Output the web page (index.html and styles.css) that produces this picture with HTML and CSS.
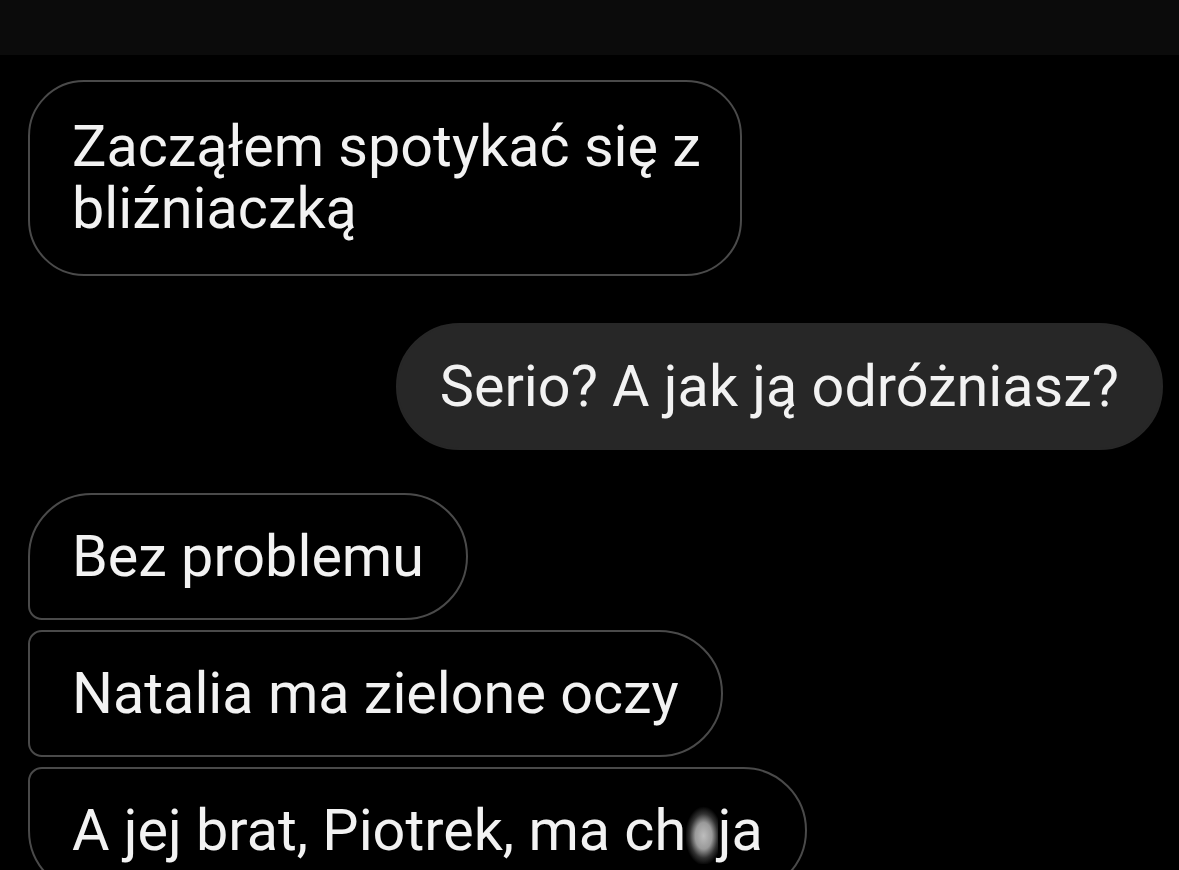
FILE: index.html
```html
<!DOCTYPE html>
<html lang="pl">
<head>
    <meta charset="utf-8">
    <title>Czat</title>
    <link rel="stylesheet" href="styles.css">
</head>
<body>
    <div class="topbar"></div>
    <div class="chat">
        <div class="msg msg-in msg-wide">Zacząłem spotykać się z<br>bliźniaczką</div>
        <div class="msg msg-out">Serio? A jak ją odróżniasz?</div>
        <div class="group">
            <div class="msg msg-in msg-first">Bez problemu</div>
            <div class="msg msg-in msg-middle">Natalia ma zielone oczy</div>
            <div class="msg msg-in msg-last">A jej brat, Piotrek, ma ch<span class="censor">u</span>ja</div>
        </div>
    </div>
</body>
</html>
```

FILE: styles.css
```css
body {
    margin: 0;
    background-color: #000;
    font-family: Roboto, "Noto Sans", sans-serif;
    color: #f2f2f2;
    overflow: hidden;
}

.topbar {
    height: 55px;
    background-color: #0b0b0b;
}

.chat {
    display: flex;
    flex-direction: column;
    align-items: flex-start;
    padding: 25px 16px 0 28px;
}

.msg {
    font-size: 57.5px;
    line-height: 62px;
    padding: 30.5px 42px;
    border: 2px solid #4a4a4a;
    border-radius: 64px;
    box-sizing: border-box;
    white-space: nowrap;
}

.msg-wide {
    width: 714px;
    padding: 34px 42px;
    border-radius: 56px;
}

.msg-out {
    align-self: flex-end;
    margin-top: 47px;
    background-color: #272727;
    border-color: #272727;
}

.group {
    display: flex;
    flex-direction: column;
    align-items: flex-start;
    gap: 10px;
    margin-top: 43px;
}

.msg-first {
    border-bottom-left-radius: 14px;
}

.msg-middle {
    border-top-left-radius: 14px;
    border-bottom-left-radius: 14px;
}

.msg-last {
    border-top-left-radius: 14px;
}

/* zamazana litera */
.censor {
    color: transparent;
    background: radial-gradient(ellipse 58% 44% at 55% 58%, #bdbdbd 0%, #9a9a9a 45%, rgba(110,110,110,0.45) 75%, transparent 100%);
}
```
